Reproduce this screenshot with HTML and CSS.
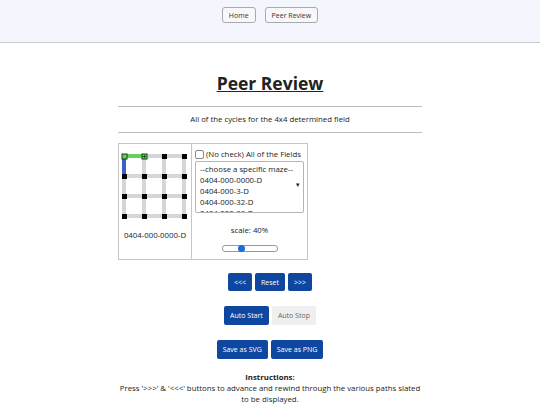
FILE: index.html
```html
<!DOCTYPE html>
<html>
<head>
  <title>Peer Review</title>
  <link rel="stylesheet" href="styles.css">
</head>
<body>
  <div class="topbar">
    <button class="navbtn">Home</button>
    <button class="navbtn">Peer Review</button>
  </div>

  <div class="page">
    <h1>Peer Review</h1>
    <hr>
    <p class="sub">All of the cycles for the 4x4 determined field</p>
    <hr>

    <table class="viewer">
      <tr>
        <td class="maze-cell">
          <svg class="maze" width="68" height="68" viewBox="0 0 68 68">
            <!-- grid lines -->
            <g stroke="#d6d6d6" stroke-width="4">
              <line x1="4" y1="4" x2="64" y2="4"/>
              <line x1="4" y1="24" x2="64" y2="24"/>
              <line x1="4" y1="44" x2="64" y2="44"/>
              <line x1="4" y1="64" x2="64" y2="64"/>
              <line x1="4" y1="4" x2="4" y2="64"/>
              <line x1="24" y1="4" x2="24" y2="64"/>
              <line x1="44" y1="4" x2="44" y2="64"/>
              <line x1="64" y1="4" x2="64" y2="64"/>
            </g>
            <!-- path -->
            <line x1="4" y1="4" x2="24" y2="4" stroke="#5fd35a" stroke-width="4"/>
            <line x1="4" y1="4" x2="4" y2="24" stroke="#3f5fc8" stroke-width="4"/>
            <g fill="#000">
              <rect x="42" y="2" width="5" height="5"/>
              <rect x="62" y="2" width="5" height="5"/>
              <rect x="2" y="22" width="5" height="5"/>
              <rect x="22" y="22" width="5" height="5"/>
              <rect x="42" y="22" width="5" height="5"/>
              <rect x="62" y="22" width="5" height="5"/>
              <rect x="2" y="42" width="5" height="5"/>
              <rect x="22" y="42" width="5" height="5"/>
              <rect x="42" y="42" width="5" height="5"/>
              <rect x="62" y="42" width="5" height="5"/>
              <rect x="2" y="62" width="5" height="5"/>
              <rect x="22" y="62" width="5" height="5"/>
              <rect x="42" y="62" width="5" height="5"/>
              <rect x="62" y="62" width="5" height="5"/>
            </g>
            <rect x="2" y="2" width="5" height="5" fill="#5fd35a" stroke="#1a3a1a" stroke-width="1"/>
            <rect x="22" y="2" width="5" height="5" fill="#5fd35a" stroke="#1a3a1a" stroke-width="1"/>
            <path d="M24.5 3v3M23 4.5h3" stroke="#1a3a1a" stroke-width="0.8"/>
          </svg>
          <div class="maze-name">0404-000-0000-D</div>
        </td>
        <td class="ctrl-cell">
          <label class="check"><span class="box"></span>(No check) All of the Fields</label>
          <div class="picker">
            <div class="opts">
              <div>--choose a specific maze--</div>
              <div>0404-000-0000-D</div>
              <div>0404-000-3-D</div>
              <div>0404-000-32-D</div>
              <div>0404-000-33-D</div>
            </div>
            <span class="arrow">&#9662;</span>
          </div>
          <div class="scale">scale: 40%</div>
          <div class="slider"><span class="thumb"></span></div>
        </td>
      </tr>
    </table>

    <div class="row first">
      <button class="btn">&lt;&lt;&lt;</button>
      <button class="btn">Reset</button>
      <button class="btn">&gt;&gt;&gt;</button>
    </div>
    <div class="row">
      <button class="btn big">Auto Start</button>
      <button class="btn big off">Auto Stop</button>
    </div>
    <div class="row">
      <button class="btn big">Save as SVG</button>
      <button class="btn big">Save as PNG</button>
    </div>

    <div class="instructions">
      <b>Instructions:</b><br>
      Press '&gt;&gt;&gt;' &amp; '&lt;&lt;&lt;' buttons to advance and rewind through the various paths slated to be displayed.
    </div>
  </div>
</body>
</html>
```

FILE: styles.css
```css
body {
  margin: 0;
  font-family: 'Open Sans', 'Noto Sans', sans-serif;
  color: #222;
  background: #fff;
  font-size: 7.8px;
}

.topbar {
  background: #f4f6fd;
  height: 43px;
  border-bottom: 1px solid #c9c9d4;
  display: flex;
  justify-content: center;
  align-items: flex-start;
  gap: 9px;
  padding-top: 7px;
  box-sizing: border-box;
}

.navbtn {
  font-family: 'Open Sans', sans-serif;
  font-size: 7px;
  color: #333;
  background: #f8f8fb;
  border: 1px solid #a9a9b4;
  border-radius: 3px;
  height: 16px;
  padding: 0 6px;
}

.page {
  width: 304px;
  margin: 0 auto;
  text-align: center;
}

h1 {
  font-size: 17.5px;
  font-weight: bold;
  text-decoration: underline;
  margin: 26px 0 0;
  line-height: 28px;
  color: #222;
}

hr {
  border: none;
  border-top: 1px solid #bdbdbd;
  margin: 0;
}

.page > hr:first-of-type {
  margin-top: 9px;
}

.sub {
  margin: 0;
  line-height: 25px;
}

.viewer {
  border-collapse: collapse;
  margin-top: 10px;
}

.viewer td {
  border: 1px solid #c6c6c6;
  vertical-align: top;
  padding: 0;
}

.maze-cell {
  width: 72px;
  height: 115px;
}

.maze {
  display: block;
  margin: 8px 0 0 1px;
}

.maze-name {
  margin-top: 10px;
}

.ctrl-cell {
  width: 109px;
  padding: 4px 3px 0 !important;
  text-align: left;
}

.check {
  display: flex;
  align-items: center;
  gap: 2px;
  line-height: 12px;
  white-space: nowrap;
}

.box {
  width: 7px;
  height: 7px;
  border: 1px solid #888;
  border-radius: 2px;
  background: #fff;
}

.picker {
  position: relative;
  border: 1px solid #b5b5b5;
  border-radius: 2px;
  height: 50px;
  overflow: hidden;
  margin-top: 1px;
}

.opts {
  padding: 2px 4px;
  line-height: 11px;
}

.arrow {
  position: absolute;
  right: 3px;
  top: 18px;
  font-size: 7px;
}

.scale {
  text-align: center;
  margin-top: 11px;
  line-height: 12px;
}

.slider {
  position: relative;
  width: 54px;
  height: 5px;
  border: 1px solid #999;
  border-radius: 3px;
  margin: 9px 0 0 27px;
  background: #fff;
}

.thumb {
  position: absolute;
  left: 15px;
  top: -1px;
  width: 7px;
  height: 7px;
  border-radius: 50%;
  background: #1a6fe0;
}

.row {
  display: flex;
  justify-content: center;
  gap: 3px;
  margin-top: 15px;
}

.row.first {
  margin-top: 13px;
}

.btn {
  font-family: 'Open Sans', sans-serif;
  font-size: 7px;
  color: #fff;
  background: #0f47a0;
  border: none;
  border-radius: 2px;
  height: 18px;
  padding: 0 6px;
}

.btn.big {
  height: 19px;
}

.btn.off {
  background: #efefef;
  color: #666;
}

.instructions {
  margin-top: 13px;
  line-height: 11px;
}
```
